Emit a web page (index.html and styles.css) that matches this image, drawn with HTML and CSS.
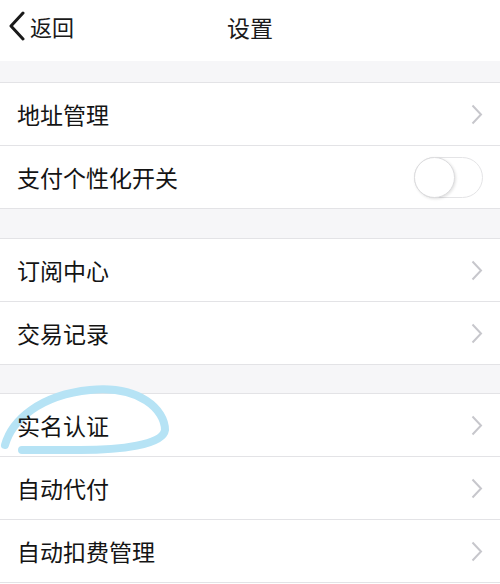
FILE: index.html
```html
<!DOCTYPE html>
<html lang="zh">
<head>
<meta charset="utf-8">
<link rel="stylesheet" href="styles.css">
</head>
<body>
<div class="page">
  <header class="nav">
    <div class="back">
      <svg class="back-icon" width="18" height="30" viewBox="0 0 18 30"><path d="M15 2 L3 15 L15 28" fill="none" stroke="#1a1a1a" stroke-width="3" stroke-linecap="round" stroke-linejoin="round"/></svg>
      <span class="back-text">返回</span>
    </div>
    <div class="title">设置</div>
  </header>

  <div class="band band-1"></div>
  <section class="group">
    <div class="row"><span class="label">地址管理</span><svg class="chev" width="12" height="21" viewBox="0 0 12 21"><path d="M1.5 1.5 L10 10.5 L1.5 19.5" fill="none" stroke="#c7c7cc" stroke-width="2"/></svg></div>
    <div class="row"><span class="label">支付个性化开关</span><div class="toggle"><div class="knob"></div></div></div>
  </section>

  <div class="band band-2"></div>
  <section class="group">
    <div class="row"><span class="label">订阅中心</span><svg class="chev" width="12" height="21" viewBox="0 0 12 21"><path d="M1.5 1.5 L10 10.5 L1.5 19.5" fill="none" stroke="#c7c7cc" stroke-width="2"/></svg></div>
    <div class="row"><span class="label">交易记录</span><svg class="chev" width="12" height="21" viewBox="0 0 12 21"><path d="M1.5 1.5 L10 10.5 L1.5 19.5" fill="none" stroke="#c7c7cc" stroke-width="2"/></svg></div>
  </section>

  <div class="band band-3"></div>
  <section class="group">
    <div class="row marked">
      <svg class="mark" width="180" height="70" viewBox="0 0 180 70"><path d="M5 51 C 12 26, 40 1, 90 -4 S 165 16, 165 36 C 163 51, 120 56, 80 56 L 22 56" fill="none" stroke="#b6e3f5" stroke-width="8" stroke-linecap="round" stroke-linejoin="round"/></svg>
      <span class="label">实名认证</span><svg class="chev" width="12" height="21" viewBox="0 0 12 21"><path d="M1.5 1.5 L10 10.5 L1.5 19.5" fill="none" stroke="#c7c7cc" stroke-width="2"/></svg>
    </div>
    <div class="row"><span class="label">自动代付</span><svg class="chev" width="12" height="21" viewBox="0 0 12 21"><path d="M1.5 1.5 L10 10.5 L1.5 19.5" fill="none" stroke="#c7c7cc" stroke-width="2"/></svg></div>
    <div class="row"><span class="label">自动扣费管理</span><svg class="chev" width="12" height="21" viewBox="0 0 12 21"><path d="M1.5 1.5 L10 10.5 L1.5 19.5" fill="none" stroke="#c7c7cc" stroke-width="2"/></svg></div>
  </section>
</div>
</body>
</html>
```
FILE: styles.css
```css
html, body {
  margin: 0;
  padding: 0;
  background: #ffffff;
}
body {
  font-family: "Noto Sans CJK SC", "Noto Sans", sans-serif;
  color: #151515;
  overflow: hidden;
}
.page {
  width: 500px;
  height: 584px;
  overflow: hidden;
}
.nav {
  height: 61px;
  display: flex;
  align-items: flex-start;
  position: relative;
  background: #ffffff;
}
.back {
  display: flex;
  align-items: center;
  gap: 4px;
  padding: 11px 0 0 8px;
}
.back-icon {
  display: block;
}
.back-text {
  font-size: 22px;
  line-height: 30px;
  color: #1a1a1a;
}
.title {
  position: absolute;
  left: 0;
  right: 0;
  top: 11px;
  text-align: center;
  font-size: 23px;
  line-height: 32px;
  color: #1a1a1a;
}
.band {
  background: #f6f6f8;
}
.band-1 { height: 21px; }
.band-2 { height: 29px; }
.band-3 { height: 28px; }
.group {
  border-top: 1px solid #e3e3e6;
  border-bottom: 1px solid #e3e3e6;
  background: #ffffff;
}
.row {
  height: 62px;
  display: flex;
  align-items: center;
  justify-content: space-between;
  padding: 0 17px 0 17px;
  position: relative;
}
.row + .row {
  border-top: 1px solid #e3e3e6;
}
.label {
  font-size: 23px;
  line-height: 30px;
  color: #141414;
  position: relative;
  z-index: 1;
}
.chev {
  display: block;
}
.toggle {
  width: 67px;
  height: 39px;
  border: 1.5px solid #e4e4e6;
  border-radius: 21px;
  position: relative;
  margin-right: 0;
  background: #ffffff;
}
.knob {
  position: absolute;
  left: -1px;
  top: -1px;
  width: 39px;
  height: 39px;
  border-radius: 50%;
  background: #ffffff;
  border: 1.5px solid #dcdcde;
  box-shadow: 1px 1px 3px rgba(0,0,0,0.12);
}
.mark {
  position: absolute;
  left: 0;
  top: 0;
  overflow: visible;
  z-index: 0;
}
```
